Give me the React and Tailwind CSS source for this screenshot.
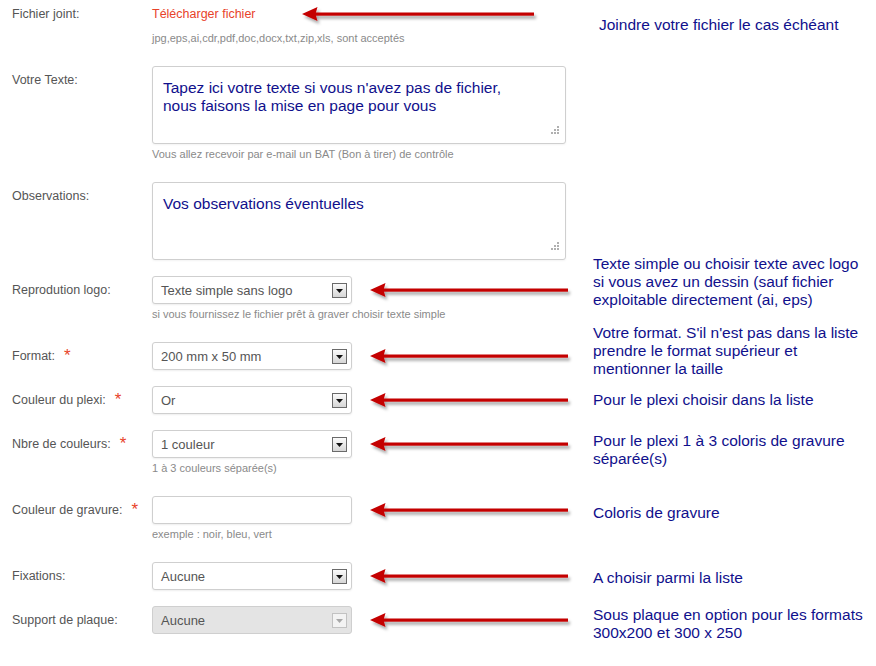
import React from 'react';

// red annotation arrow, pointing left, with a soft drop shadow
function Arrow({ width }) {
  return (
    <svg width={width} height={28} viewBox={`0 0 ${width} 28`} className="shrink-0 overflow-visible">
      <defs>
        <filter id="arrowShadow" x="-10%" y="-60%" width="120%" height="220%">
          <feDropShadow dx="2" dy="3" stdDeviation="1.6" floodColor="#000" floodOpacity="0.35" />
        </filter>
      </defs>
      <g filter="url(#arrowShadow)" fill="#c40000">
        <rect x="13" y="12.5" width={width - 15} height="3.2" />
        <path d="M0 14 L15.5 7 L13.5 14 L15.5 21 Z" />
      </g>
    </svg>
  );
}

function Label({ text, required }) {
  return (
    <div className="w-[152px] shrink-0 pl-3 h-[28px] leading-[28px] text-[12.5px] text-[#555] whitespace-nowrap">
      {text}
      {required && (
        <span className="inline-block ml-[9px] text-[17px] leading-none text-[#e8432a] translate-y-[1px]">*</span>
      )}
    </div>
  );
}

function Help({ children }) {
  return <div className="mt-[3px] mb-[5px] leading-[14px] text-[11px] text-[#8a8a8a] whitespace-nowrap">{children}</div>;
}

function Note({ children, className = '' }) {
  return (
    <div className={`h-[28px] flex items-center ${className}`}>
      <p className="whitespace-nowrap text-[15.5px] leading-[18px] text-[#10108c]">{children}</p>
    </div>
  );
}

function Select({ value, disabled }) {
  return (
    <div
      className={`w-[200px] h-[28px] shrink-0 flex items-center justify-between pl-[8px] pr-[4px] border border-[#cfcfcf] rounded-[3px] text-[13px] text-[#555] ${
        disabled ? 'bg-[#e4e4e4]' : 'bg-white shadow-[0_1px_2px_rgba(0,0,0,0.07)]'
      }`}
    >
      <span className="mt-[2px]">{value}</span>
      <span
        className={`w-[15px] h-[15px] border flex items-center justify-center ${
          disabled ? 'border-[#c2c2c2] bg-[#f3f3f3]' : 'border-[#6a6a6a] bg-gradient-to-b from-[#fbfbfb] to-[#d6d6d6]'
        }`}
      >
        <svg width="7" height="4" viewBox="0 0 7 4" className="mt-[2px]">
          <path d="M0 0 H7 L3.5 4 Z" fill={disabled ? '#a8a8a8' : '#111'} />
        </svg>
      </span>
    </div>
  );
}

function TextBox({ children }) {
  return (
    <div className="relative w-[414px] h-[78px] border border-[#cfcfcf] rounded-[3px] bg-white pt-[12px] px-[10px] text-[15.5px] leading-[18px] text-[#10108c] shadow-[0_1px_2px_rgba(0,0,0,0.05)]">
      {children}
      <svg width="8" height="8" viewBox="0 0 8 8" className="absolute right-[6px] bottom-[9px]">
        <g fill="#b0b0b0">
          <rect x="6" y="0" width="2" height="2" />
          <rect x="3" y="3" width="2" height="2" />
          <rect x="6" y="3" width="2" height="2" />
          <rect x="0" y="6" width="2" height="2" />
          <rect x="3" y="6" width="2" height="2" />
          <rect x="6" y="6" width="2" height="2" />
        </g>
      </svg>
    </div>
  );
}

// one form row: label on the left, control + arrow + note on the right
function SelectRow({ label, required, value, disabled, help, note, shift }) {
  return (
    <div className="flex mb-4">
      <Label text={label} required={required} />
      <div className="flex flex-col min-w-0">
        <div className="flex items-center h-[28px]">
          <Select value={value} disabled={disabled} />
          <div className="ml-[18px]">
            <Arrow width={200} />
          </div>
          <Note className={`ml-[23px] ${shift}`}>{note}</Note>
        </div>
        {help && <Help>{help}</Help>}
      </div>
    </div>
  );
}

export default function App() {
  return (
    <div className="w-[876px] h-[666px] overflow-hidden bg-white font-['Liberation_Sans',Arial,sans-serif]">
      {/* Fichier joint */}
      <div className="flex mb-4">
        <Label text="Fichier joint:" />
        <div className="flex flex-col">
          <div className="flex items-center h-[28px]">
            <span className="w-[150px] shrink-0 text-[12.5px] text-[#e8432a]">Télécharger fichier</span>
            <Arrow width={234} />
            <Note className="ml-[63px] translate-y-[11px]">Joindre votre fichier le cas échéant</Note>
          </div>
          <Help>jpg,eps,ai,cdr,pdf,doc,docx,txt,zip,xls, sont acceptés</Help>
        </div>
      </div>

      {/* Votre Texte */}
      <div className="flex mb-4">
        <Label text="Votre Texte:" />
        <div className="flex flex-col">
          <TextBox>
            Tapez ici votre texte si vous n'avez pas de fichier,
            <br />
            nous faisons la mise en page pour vous
          </TextBox>
          <Help>Vous allez recevoir par e-mail un BAT (Bon à tirer) de contrôle</Help>
        </div>
      </div>

      {/* Observations */}
      <div className="flex mb-4">
        <Label text="Observations:" />
        <TextBox>Vos observations éventuelles</TextBox>
      </div>

      <SelectRow
        label="Reprodution logo:"
        value="Texte simple sans logo"
        help="si vous fournissez le fichier prêt à graver choisir texte simple"
        shift="-translate-y-[8px]"
        note={
          <>
            Texte simple ou choisir texte avec logo
            <br />
            si vous avez un dessin (sauf fichier
            <br />
            exploitable directement (ai, eps)
          </>
        }
      />
      <SelectRow
        label="Format:"
        required
        value="200 mm x 50 mm"
        shift="-translate-y-[5px]"
        note={
          <>
            Votre format. S'il n'est pas dans la liste
            <br />
            prendre le format supérieur et
            <br />
            mentionner la taille
          </>
        }
      />
      <SelectRow
        label="Couleur du plexi:"
        required
        value="Or"
        shift="translate-y-0"
        note="Pour le plexi choisir dans la liste"
      />
      <SelectRow
        label="Nbre de couleurs:"
        required
        value="1 couleur"
        help="1 à 3 couleurs séparée(s)"
        shift="translate-y-[6px]"
        note={
          <>
            Pour le plexi 1 à 3 coloris de gravure
            <br />
            séparée(s)
          </>
        }
      />

      {/* Couleur de gravure: plain input */}
      <div className="flex mb-4">
        <Label text="Couleur de gravure:" required />
        <div className="flex flex-col">
          <div className="flex items-center h-[28px]">
            <div className="w-[200px] h-[28px] shrink-0 border border-[#cfcfcf] rounded-[3px] bg-white shadow-[0_1px_2px_rgba(0,0,0,0.07)]" />
            <div className="ml-[18px]">
              <Arrow width={200} />
            </div>
            <Note className="ml-[23px] translate-y-[3px]">Coloris de gravure</Note>
          </div>
          <Help>exemple : noir, bleu, vert</Help>
        </div>
      </div>

      <SelectRow label="Fixations:" value="Aucune" shift="translate-y-[2px]" note="A choisir parmi la liste" />
      <SelectRow
        label="Support de plaque:"
        value="Aucune"
        disabled
        shift="translate-y-[4px]"
        note={
          <>
            Sous plaque en option pour les formats
            <br />
            300x200 et 300 x 250
          </>
        }
      />
    </div>
  );
}
